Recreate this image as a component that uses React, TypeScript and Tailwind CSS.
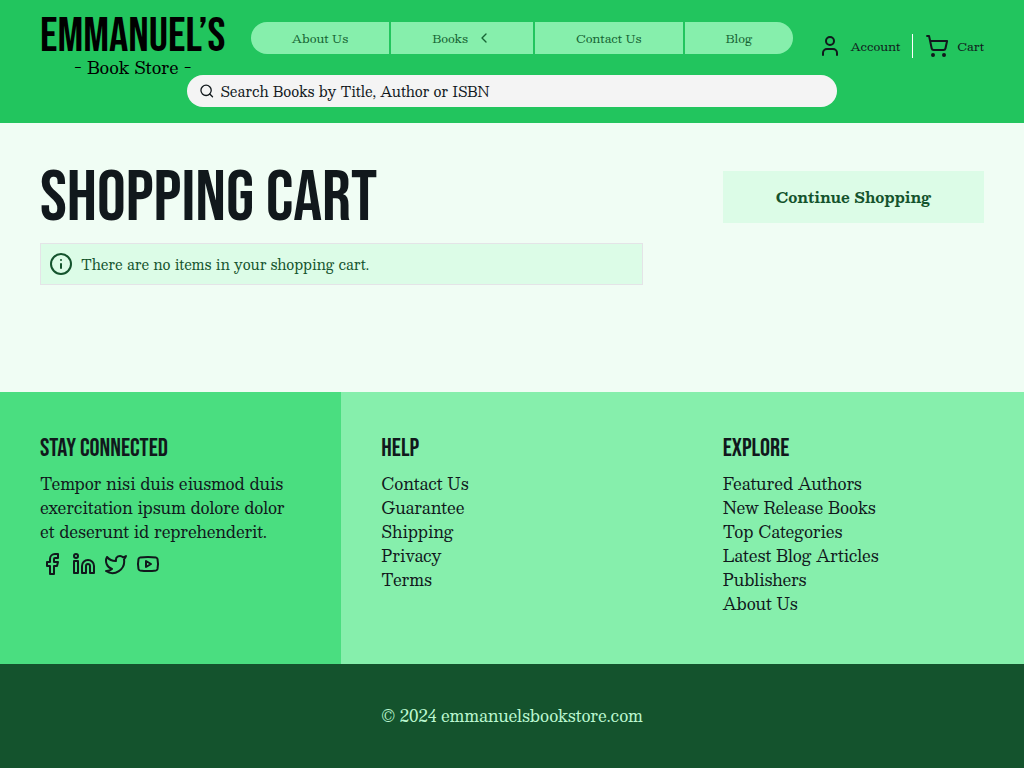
import {
  ChevronLeft,
  Facebook,
  Info,
  Linkedin,
  Search,
  ShoppingCart,
  Twitter,
  User,
  Youtube,
} from "lucide-react";

const display =
  "font-['Bebas_Neue','Liberation_Sans',sans-serif] font-normal uppercase";

const navItem =
  "flex h-8 items-center gap-2 bg-[#86efac] px-[41px] text-[12px] whitespace-nowrap text-[#166534]";

const columnTitle = `${display} mb-[6px] text-[25px] leading-[34px]`;

const socials = [
  { label: "Facebook", Icon: Facebook },
  { label: "LinkedIn", Icon: Linkedin },
  { label: "Twitter", Icon: Twitter },
  { label: "YouTube", Icon: Youtube },
];

const helpLinks = ["Contact Us", "Guarantee", "Shipping", "Privacy", "Terms"];

const exploreLinks = [
  "Featured Authors",
  "New Release Books",
  "Top Categories",
  "Latest Blog Articles",
  "Publishers",
  "About Us",
];

function LinkColumn({ title, links }: { title: string; links: string[] }) {
  return (
    <nav aria-label={title} className="px-10 pt-10 pb-12">
      <h2 className={columnTitle}>{title}</h2>
      <ul>
        {links.map((link) => (
          <li key={link}>
            <a href="#">{link}</a>
          </li>
        ))}
      </ul>
    </nav>
  );
}

function Header() {
  return (
    <header className="bg-[#22c55e] px-10 py-4">
      <div className="flex h-[59px] items-start justify-between">
        <a href="#" className="flex flex-col items-center text-black">
          <span className={`${display} text-[48px] leading-[42px]`}>
            Emmanuel’s
          </span>
          <span className="text-[17px] leading-[18px]">- Book Store -</span>
        </a>
        <nav aria-label="Main" className="mt-[6px] flex gap-[2px]">
          <a href="#" className={`${navItem} rounded-l-full`}>
            About Us
          </a>
          <button type="button" className={navItem}>
            Books
            <ChevronLeft size={16} />
          </button>
          <a href="#" className={navItem}>
            Contact Us
          </a>
          <a href="#" className={`${navItem} rounded-r-full`}>
            Blog
          </a>
        </nav>
        <div className="mt-[18px] flex text-[12px] leading-6">
          <a href="#" className="flex gap-2 border-r border-white pr-3">
            <User size={24} />
            Account
          </a>
          <a href="#" className="flex gap-2 pl-3">
            <ShoppingCart size={24} />
            Cart
          </a>
        </div>
      </div>
      <label className="mx-auto flex h-8 max-w-[650px] items-center gap-[6px] rounded-full bg-[#f4f4f4] px-3">
        <Search size={16} />
        <input
          type="search"
          aria-label="Search books"
          placeholder="Search Books by Title, Author or ISBN"
          className="w-full bg-transparent text-[14px] outline-none placeholder:text-[#11181c]"
        />
      </label>
    </header>
  );
}

export default function App() {
  return (
    <div className="flex min-h-screen flex-col bg-[#f0fdf4] font-['Besley','Liberation_Serif',serif] text-[#11181c]">
      <Header />
      <main className="grid grow grid-cols-3 items-start gap-20 px-10 pt-12 pb-[107px]">
        <section className="col-span-2">
          <h1
            className={`${display} mb-4 text-[72px] leading-[56px] whitespace-nowrap`}
          >
            Shopping Cart
          </h1>
          <p className="flex h-[42px] items-center gap-2 border border-[#e4e4e7] bg-[#dcfce7] px-2 text-[14px] text-[#14532d]">
            <Info size={24} />
            There are no items in your shopping cart.
          </p>
        </section>
        <a
          href="#"
          className="flex h-[52px] items-center justify-center bg-[#dcfce7] text-[15px] font-bold text-[#14532d]"
        >
          Continue Shopping
        </a>
      </main>
      <footer>
        <div className="grid grid-cols-3 bg-[#86efac] text-[16px] leading-6">
          <section className="bg-[#4ade80] px-10 pt-10 pb-12">
            <h2 className={columnTitle}>Stay connected</h2>
            <p>
              Tempor nisi duis eiusmod duis exercitation ipsum dolore dolor et
              deserunt id reprehenderit.
            </p>
            <div className="mt-2 flex gap-2">
              {socials.map(({ label, Icon }) => (
                <a key={label} href="#" aria-label={label}>
                  <Icon size={24} />
                </a>
              ))}
            </div>
          </section>
          <LinkColumn title="Help" links={helpLinks} />
          <LinkColumn title="Explore" links={exploreLinks} />
        </div>
        <p className="bg-[#14532d] p-10 text-center text-[16px] leading-6 text-[#bbf7d0]">
          © 2024 emmanuelsbookstore.com
        </p>
      </footer>
    </div>
  );
}
